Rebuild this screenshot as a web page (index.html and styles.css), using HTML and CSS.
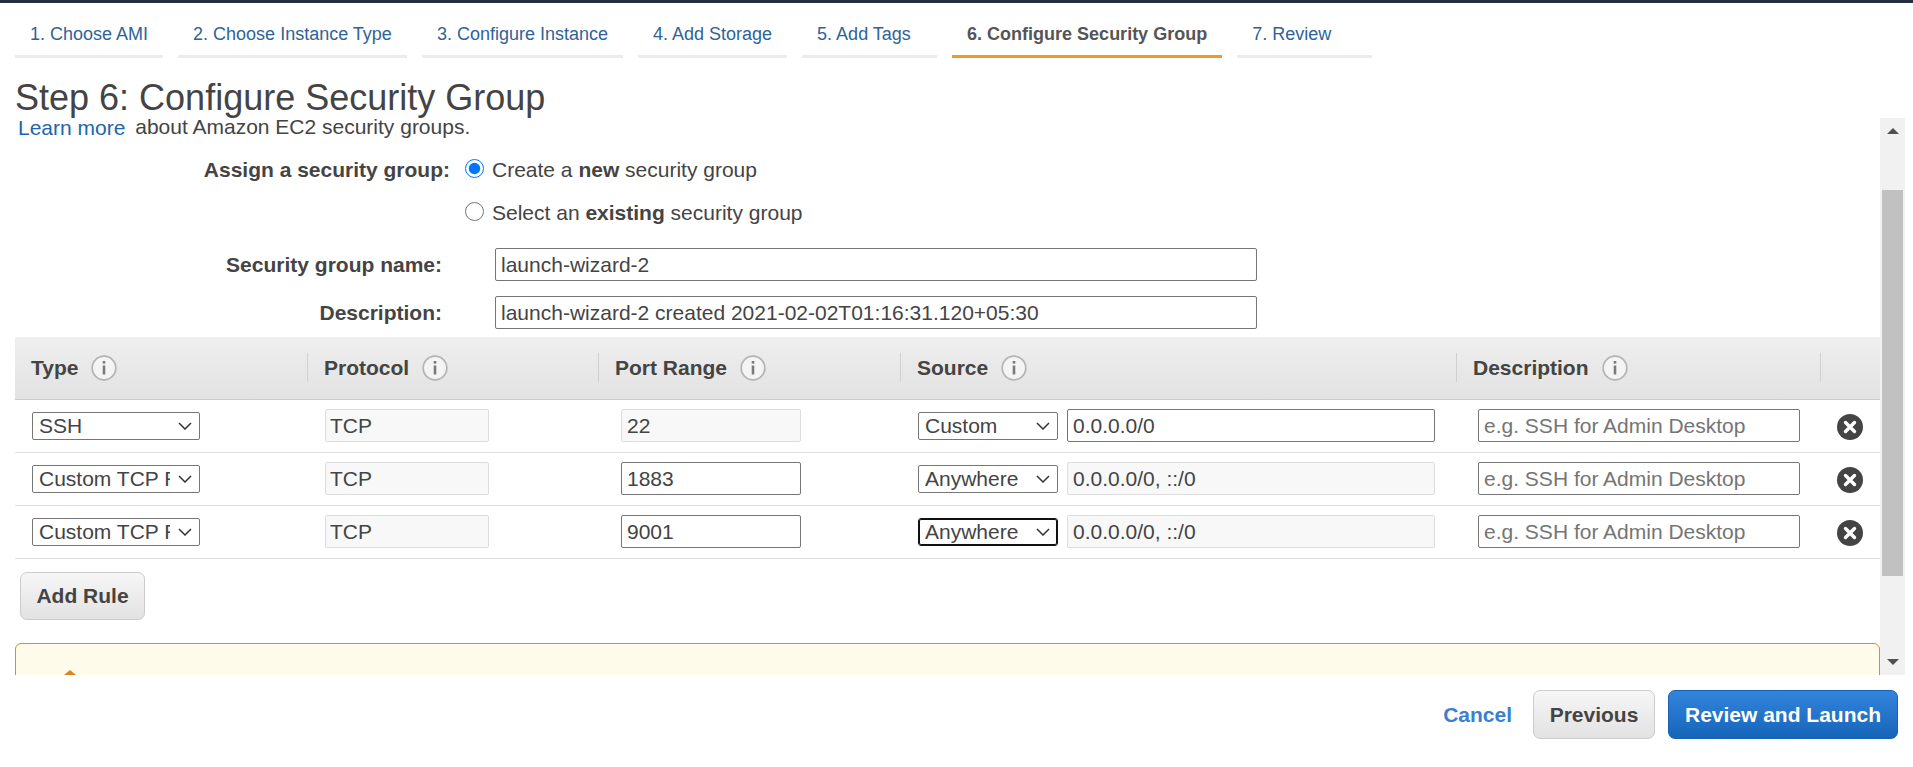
FILE: index.html
```html
<!DOCTYPE html>
<html lang="en">
<head>
    <meta charset="UTF-8">
    <title>Step 6: Configure Security Group</title>
    <link rel="stylesheet" href="styles.css">
</head>
<body>
    <svg class="defs" width="0" height="0">
        <symbol id="info" viewBox="0 0 26 26">
            <circle cx="13" cy="13" r="11.8" fill="#f4f4f4" stroke="#b4b4b4" stroke-width="1.7"/>
            <rect x="11.7" y="10.5" width="2.6" height="9" fill="#7a7a7a"/>
            <rect x="11.7" y="6" width="2.6" height="2.6" fill="#7a7a7a"/>
        </symbol>
        <symbol id="remove" viewBox="0 0 26 26">
            <circle cx="13" cy="13" r="13" fill="#444"/>
            <path d="M8.5 8.5L17.5 17.5M17.5 8.5L8.5 17.5" stroke="#fff" stroke-width="3.4" stroke-linecap="round"/>
        </symbol>
    </svg>

    <div class="topbar"></div>

    <ul class="tabs">
        <li><a href="#">1. Choose AMI</a></li>
        <li><a href="#">2. Choose Instance Type</a></li>
        <li><a href="#">3. Configure Instance</a></li>
        <li><a href="#">4. Add Storage</a></li>
        <li><a href="#">5. Add Tags</a></li>
        <li class="active"><a href="#">6. Configure Security Group</a></li>
        <li><a href="#">7. Review</a></li>
    </ul>

    <h1>Step 6: Configure Security Group</h1>

    <div class="pane">
        <div class="pane-content">
            <p class="intro"><a href="#">Learn more</a> about Amazon EC2 security groups.</p>

            <div class="form-row row-assign">
                <label class="form-label label-assign">Assign a security group:</label>
                <label class="radio"><input type="radio" name="sg" checked><span>Create a <b>new</b> security group</span></label>
            </div>
            <div class="form-row row-existing">
                <span class="form-label label-assign"></span>
                <label class="radio"><input type="radio" name="sg"><span>Select an <b>existing</b> security group</span></label>
            </div>
            <div class="form-row row-name">
                <label class="form-label label-field" for="sgName">Security group name:</label>
                <input class="wide" type="text" id="sgName" value="launch-wizard-2">
            </div>
            <div class="form-row row-desc">
                <label class="form-label label-field" for="sgDesc">Description:</label>
                <input class="wide" type="text" id="sgDesc" value="launch-wizard-2 created 2021-02-02T01:16:31.120+05:30">
            </div>

            <table class="rules">
                <colgroup>
                    <col class="col-type"><col class="col-protocol"><col class="col-port"><col class="col-source"><col class="col-desc"><col class="col-remove">
                </colgroup>
                <thead>
                    <tr>
                        <th><span>Type</span><svg class="info"><use href="#info"/></svg></th>
                        <th><span>Protocol</span><svg class="info"><use href="#info"/></svg></th>
                        <th><span>Port Range</span><svg class="info"><use href="#info"/></svg></th>
                        <th><span>Source</span><svg class="info"><use href="#info"/></svg></th>
                        <th><span>Description</span><svg class="info"><use href="#info"/></svg></th>
                        <th></th>
                    </tr>
                </thead>
                <tbody>
                    <tr>
                        <td class="cell-type"><select class="select-type"><option>SSH</option></select></td>
                        <td class="cell-protocol"><input class="input-protocol" type="text" value="TCP" readonly></td>
                        <td class="cell-port"><input class="input-port" type="text" value="22" readonly></td>
                        <td class="cell-source"><select class="select-source"><option>Custom</option></select><input class="input-source" type="text" value="0.0.0.0/0"></td>
                        <td class="cell-desc"><input class="input-desc" type="text" placeholder="e.g. SSH for Admin Desktop"></td>
                        <td class="cell-remove"><svg class="remove"><use href="#remove"/></svg></td>
                    </tr>
                    <tr>
                        <td class="cell-type"><select class="select-type"><option>Custom TCP Rule</option></select></td>
                        <td class="cell-protocol"><input class="input-protocol" type="text" value="TCP" readonly></td>
                        <td class="cell-port"><input class="input-port editable" type="text" value="1883"></td>
                        <td class="cell-source"><select class="select-source"><option>Anywhere</option></select><input class="input-source" type="text" value="0.0.0.0/0, ::/0" readonly></td>
                        <td class="cell-desc"><input class="input-desc" type="text" placeholder="e.g. SSH for Admin Desktop"></td>
                        <td class="cell-remove"><svg class="remove"><use href="#remove"/></svg></td>
                    </tr>
                    <tr>
                        <td class="cell-type"><select class="select-type"><option>Custom TCP Rule</option></select></td>
                        <td class="cell-protocol"><input class="input-protocol" type="text" value="TCP" readonly></td>
                        <td class="cell-port"><input class="input-port editable" type="text" value="9001"></td>
                        <td class="cell-source"><select class="select-source focused"><option>Anywhere</option></select><input class="input-source" type="text" value="0.0.0.0/0, ::/0" readonly></td>
                        <td class="cell-desc"><input class="input-desc" type="text" placeholder="e.g. SSH for Admin Desktop"></td>
                        <td class="cell-remove"><svg class="remove"><use href="#remove"/></svg></td>
                    </tr>
                </tbody>
            </table>

            <button class="btn add-rule" type="button">Add Rule</button>

            <div class="warning">
                <svg class="warning-icon" width="24" height="10" viewBox="0 0 24 10"><path d="M12 0L24 10H0Z" fill="#d9861f"/></svg>
            </div>
        </div>

        <div class="scrollbar">
            <div class="scroll-btn"><span class="arrow-up"></span></div>
            <div class="scroll-track"><div class="scroll-thumb"></div></div>
            <div class="scroll-btn"><span class="arrow-down"></span></div>
        </div>
    </div>

    <div class="footer">
        <a class="cancel" href="#">Cancel</a>
        <button class="btn previous" type="button">Previous</button>
        <button class="btn primary" type="button">Review and Launch</button>
    </div>
</body>
</html>
```

FILE: styles.css
```css
body {
    font-family: "Liberation Sans", Arial, sans-serif;
    font-size: 21px;
    color: #444;
    margin: 0;
    padding: 0;
    background-color: #fff;
    overflow: hidden;
}
.defs {
    display: block;
    height: 0;
}
.topbar {
    height: 3px;
    background-color: #232f3e;
}

/* wizard tabs */
.tabs {
    display: flex;
    gap: 15px;
    list-style: none;
    margin: 0;
    padding: 0 0 0 15px;
}
.tabs li {
    min-width: 135px;
    padding: 21px 15px 11px;
    box-sizing: border-box;
    border-bottom: 3px solid #ececec;
    font-size: 18px;
    line-height: 20px;
}
.tabs a {
    color: #2e6399;
    text-decoration: none;
}
.tabs .active {
    border-bottom-color: #f09a22;
}
.tabs .active a {
    color: #555;
    font-weight: bold;
}
h1 {
    font-size: 36px;
    font-weight: normal;
    line-height: 40px;
    margin: 20px 0 0 15px;
    color: #444;
}

/* scrolling middle part */
.pane {
    display: flex;
    height: 557px;
    margin-right: 8px;
}
.pane-content {
    flex: 1;
    overflow: hidden;
    margin-top: -4px;
    padding: 3px 0 0 15px;
}
.intro {
    margin: 0 0 0 3px;
    line-height: 20px;
}
.intro a {
    color: #1c66ad;
    text-decoration: none;
    margin-right: 4px;
    vertical-align: -1px;
}
.form-row {
    display: flex;
    align-items: center;
}
.row-assign {
    height: 24px;
    margin-top: 20px;
}
.row-existing {
    height: 24px;
    margin-top: 19px;
}
.row-name {
    margin-top: 23px;
}
.row-desc {
    margin-top: 15px;
}
.form-label {
    font-weight: bold;
    text-align: right;
}
.label-assign {
    width: 435px;
}
.label-field {
    width: 427px;
    margin-right: 53px;
}
.radio {
    display: flex;
    align-items: center;
    margin-left: 15px;
}
.radio input {
    width: 19px;
    height: 19px;
    margin: 0 8px 4px 0;
}
input[type="text"] {
    font-family: "Liberation Sans", Arial, sans-serif;
    font-size: 21px;
    color: #444;
    height: 33px;
    padding: 0 5px;
    border: 1px solid #767676;
    border-radius: 2px;
    box-sizing: border-box;
    background-color: #fff;
}
input[readonly] {
    background-color: #f8f8f8;
    border-color: #ddd;
}
input.wide {
    width: 762px;
}

/* rules table */
.rules {
    width: 1865px;
    table-layout: fixed;
    border-collapse: collapse;
    margin-top: 8px;
}
.col-type { width: 292px; }
.col-protocol { width: 291px; }
.col-port { width: 302px; }
.col-source { width: 556px; }
.col-desc { width: 364px; }
.col-remove { width: 60px; }
.rules th {
    height: 62px;
    padding: 0 0 0 17px;
    box-sizing: border-box;
    text-align: left;
    font-size: 21px;
    background: linear-gradient(#efefef, #e2e2e2);
    border-bottom: 1px solid #ccc;
    position: relative;
}
.rules th:first-child {
    padding-left: 16px;
}
.rules th span {
    vertical-align: middle;
}
.rules th + th::before {
    content: "";
    position: absolute;
    left: 0;
    top: 16px;
    height: 29px;
    border-left: 1px solid #d0d0d0;
}
.info {
    width: 26px;
    height: 26px;
    margin-left: 13px;
    vertical-align: middle;
}
.rules td {
    height: 53px;
    padding: 0;
    box-sizing: border-box;
    border-bottom: 1px solid #ddd;
}
.rules .cell-type { padding-left: 17px; }
.rules .cell-protocol { padding-left: 18px; }
.rules .cell-port { padding-left: 23px; }
.rules .cell-source { padding-left: 18px; }
.rules .cell-desc { padding-left: 22px; }
.rules .cell-remove { padding-left: 17px; }
.rules select {
    appearance: none;
    font-family: "Liberation Sans", Arial, sans-serif;
    font-size: 21px;
    color: #444;
    height: 28px;
    padding: 0 29px 0 6px;
    border: 1px solid #767676;
    border-radius: 2px;
    background: #fff url("data:image/svg+xml,%3Csvg xmlns='http://www.w3.org/2000/svg' width='14' height='8'%3E%3Cpath d='M1 1l6 6 6-6' fill='none' stroke='%23333' stroke-width='1.5'/%3E%3C/svg%3E") no-repeat right 7px center;
    vertical-align: middle;
}
.select-type { width: 168px; }
.rules .select-source { width: 140px; margin-right: 9px; }
.rules .select-source.focused {
    border-color: #111;
    outline: 1px solid #111;
    outline-offset: -2px;
    border-radius: 3px;
}
input.input-protocol { width: 164px; padding-left: 4px; vertical-align: middle; }
input.input-port { width: 180px; vertical-align: middle; }
input.input-source { width: 368px; vertical-align: middle; }
input.input-desc { width: 322px; vertical-align: middle; }
.remove {
    display: block;
    width: 26px;
    height: 26px;
    margin-top: 2px;
}

/* buttons */
.btn {
    font-family: "Liberation Sans", Arial, sans-serif;
    font-size: 21px;
    font-weight: bold;
    color: #444;
    height: 49px;
    padding: 0;
    border: 1px solid #ccc;
    border-radius: 7px;
    box-sizing: border-box;
    background: linear-gradient(#f6f6f6, #e2e2e2);
    cursor: pointer;
}
.add-rule {
    display: block;
    width: 125px;
    height: 48px;
    margin: 13px 0 0 5px;
}
.warning {
    height: 80px;
    margin-top: 23px;
    padding: 26px 0 0 42px;
    box-sizing: border-box;
    background-color: #fffbea;
    border: 1px solid #d98e2b;
    border-radius: 6px;
}
.warning-icon {
    display: block;
}

/* fake scrollbar, the page itself does not scroll */
.scrollbar {
    display: flex;
    flex-direction: column;
    width: 25px;
    background-color: #f1f1f1;
}
.scroll-btn {
    display: flex;
    align-items: center;
    justify-content: center;
    height: 26px;
}
.arrow-up {
    border: 6px solid transparent;
    border-top: 0;
    border-bottom: 6px solid #505050;
}
.arrow-down {
    border: 6px solid transparent;
    border-bottom: 0;
    border-top: 6px solid #505050;
}
.scroll-track {
    flex: 1;
    padding: 46px 2px 0;
}
.scroll-thumb {
    height: 386px;
    background-color: #c1c1c1;
}

/* footer buttons */
.footer {
    display: flex;
    align-items: center;
    justify-content: flex-end;
    padding: 15px 15px 0 0;
}
.cancel {
    font-weight: bold;
    color: #3b7fd0;
    text-decoration: none;
    margin-right: 21px;
}
.previous {
    width: 122px;
    margin-right: 13px;
}
.primary {
    width: 230px;
    color: #fff;
    border-color: #1a62ad;
    background: linear-gradient(#3384dc, #1565ba);
}
```
